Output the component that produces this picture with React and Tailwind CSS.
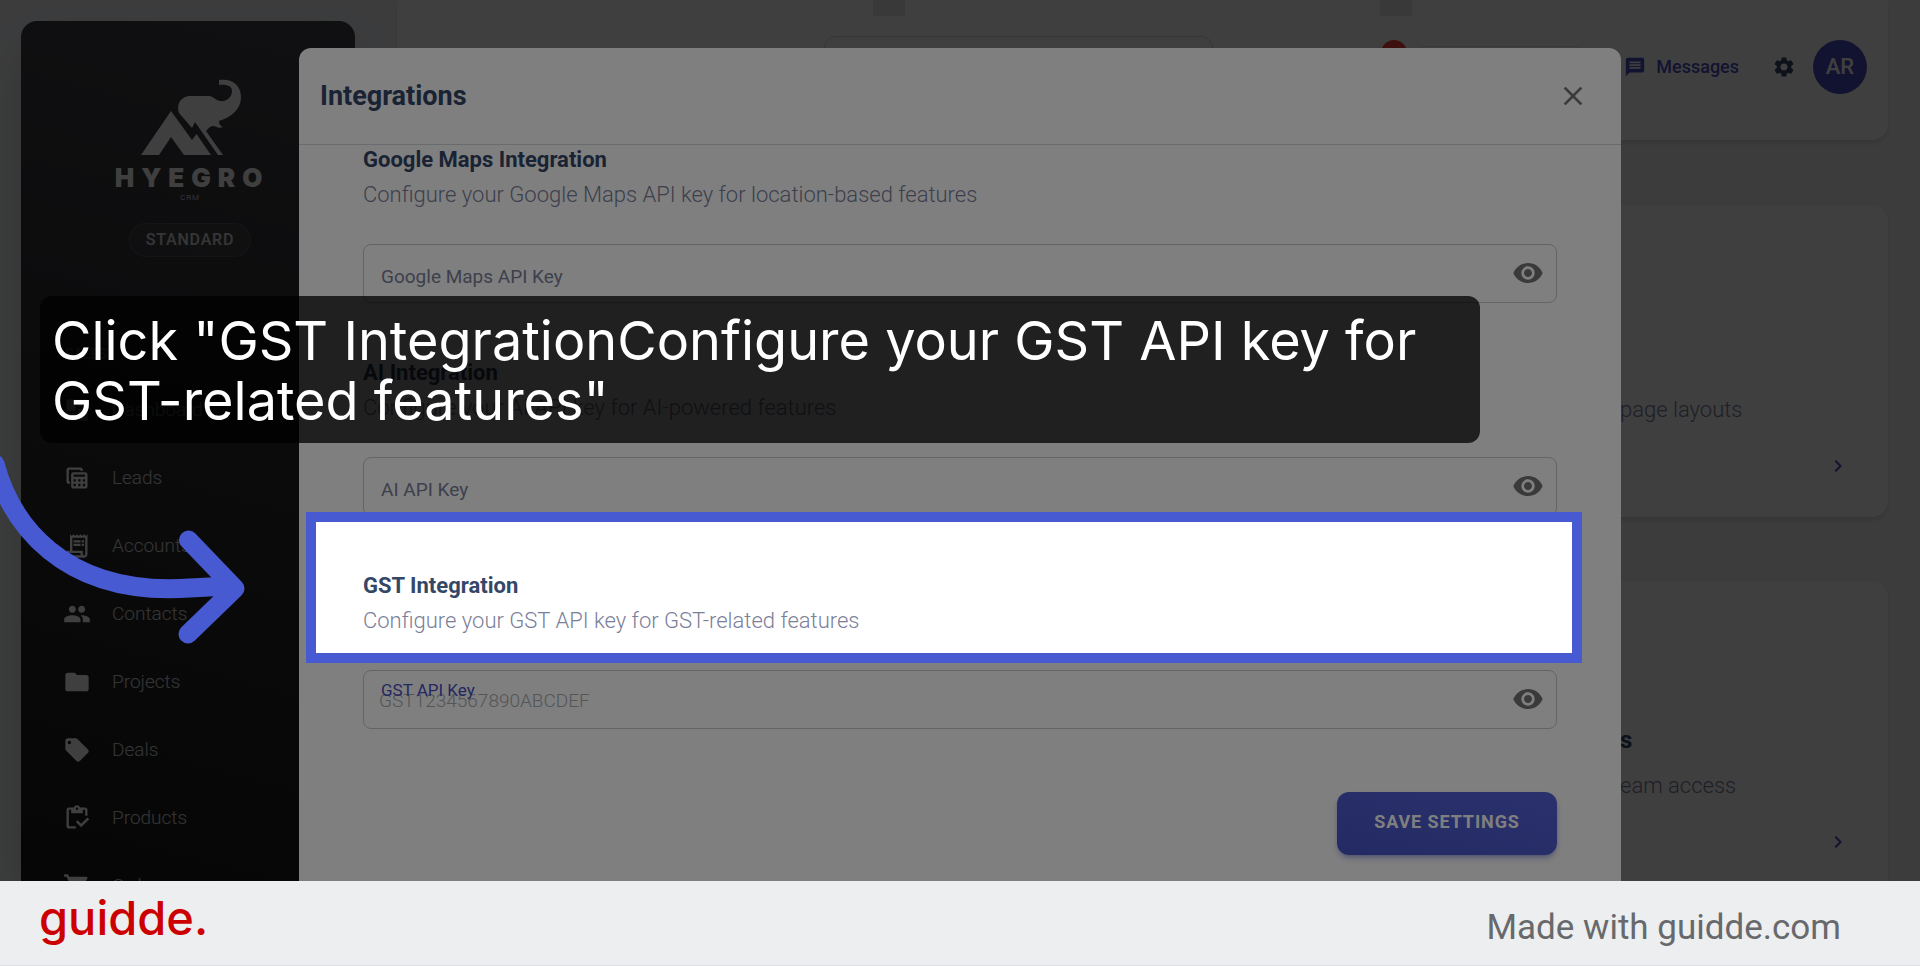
import {
  MdChevronRight,
  MdClose,
  MdDashboard,
  MdFolder,
  MdLocalOffer,
  MdMessage,
  MdOutlineInventory,
  MdOutlineReceiptLong,
  MdPeople,
  MdSettings,
  MdShoppingCart,
  MdTableView,
  MdVisibility,
} from 'react-icons/md'

const menu = [
  { name: 'Dashboard', icon: MdDashboard },
  { name: 'Leads', icon: MdTableView },
  { name: 'Accounts', icon: MdOutlineReceiptLong },
  { name: 'Contacts', icon: MdPeople },
  { name: 'Projects', icon: MdFolder },
  { name: 'Deals', icon: MdLocalOffer },
  { name: 'Products', icon: MdOutlineInventory },
  { name: 'Orders', icon: MdShoppingCart },
]

const sections = [
  {
    id: 'maps',
    title: 'Google Maps Integration',
    text: 'Configure your Google Maps API key for location-based features',
    label: 'Google Maps API Key',
  },
  {
    id: 'ai',
    title: 'AI Integration',
    text: 'Configure your AI API key for AI-powered features',
    label: 'AI API Key',
  },
  {
    id: 'gst',
    title: 'GST Integration',
    text: 'Configure your GST API key for GST-related features',
    label: 'GST API Key',
    placeholder: 'GST1234567890ABCDEF',
  },
]

function Logo() {
  return (
    <div className="flex flex-col items-center">
      <svg viewBox="0 0 102 78" className="w-[102px] h-[78px] fill-white ml-1" aria-hidden="true">
        <path d="M0 76 L30 32 L51 61 L55.500 55 L70 76 L43 76 L30 58 L18 76 Z" />
        <path d="M51 49 L38 34 C35 25 40 18 48 17 L68 17 C72 17 74 21 79 22 C86 23 91 18 91 12 C91 7 86 5 78 6 L78 1 C91 -1 100 6 100 18 C100 30 91 38 78 42 C78 45 79 47 82 48 C77 50 75 47 72 47 C69 47 67 50 65 52 L82 76 L77 76 L54 43 Z" />
      </svg>
      <div className="mt-[5px] pl-1 font-['Inter'] text-[26px] leading-8 font-black tracking-[7px] text-white">HYEGRO</div>
      <div className="text-[8px] leading-2 font-light tracking-widest text-white">CRM</div>
    </div>
  )
}

function Sidebar() {
  return (
    <aside className="w-[334px] shrink-0 ml-[21px] mt-[21px] rounded-t-2xl bg-linear-195 from-[#42424a] to-[#191919] shadow-2xl">
      <div className="flex flex-col items-center pt-[58px] pl-1">
        <Logo />
        <span className="mt-[21px] rounded-full border border-white/10 bg-white/5 px-4 py-1 text-[16px] leading-6 font-medium tracking-wider text-white/80">
          STANDARD
        </span>
      </div>
      <div className="mt-[87px] pl-11 text-sm leading-5 font-bold text-white/60">SALES</div>
      <nav className="mt-3">
        {menu.map(({ name, icon: Icon }) => (
          <a key={name} href="#" className="flex items-center h-[68px] pl-[42px] gap-[21px] text-[19px] font-light text-white/80">
            <Icon className="size-7 text-white" />
            {name}
          </a>
        ))}
      </nav>
    </aside>
  )
}

function Header() {
  return (
    <header className="relative h-[140px] shrink-0 rounded-b-2xl bg-white shadow-md">
      <div className="flex items-center justify-end h-[133px] pr-[21px]">
        <div className="w-[389px] h-[61px] mr-42 rounded-xl border border-gray-300" />
        <span className="self-start mt-10 mr-2.5 size-[26px] rounded-full bg-[#f44335]" />
        <div className="w-[166px] h-[42px] mr-[41px] rounded-lg border border-gray-200" />
        <button className="flex items-center gap-2.5 text-[18px] font-medium text-[#4a4ec4]">
          <MdMessage className="size-[22px]" />
          Messages
        </button>
        <button aria-label="Settings" className="ml-[33px] mr-[17px] text-[#344767]">
          <MdSettings className="size-6" />
        </button>
        <span className="flex items-center justify-center size-[54px] rounded-full bg-[#4a4ec4] text-[22px] font-medium text-white">
          AR
        </span>
      </div>
      <div className="absolute top-0 left-[476px] w-8 h-4 bg-gray-200" />
      <div className="absolute top-0 right-[476px] w-8 h-4 bg-gray-200" />
    </header>
  )
}

function SettingCard({ title, text }) {
  return (
    <section className="flex justify-end h-[311px] shrink-0 rounded-2xl bg-white shadow-md">
      <div className="w-[268px] pt-[143px]">
        <h3 className="h-[30px] text-2xl leading-[30px] font-bold text-[#344767]">{title}</h3>
        <p className="mt-4 text-[22px] leading-[30px] font-light text-[#7b809a]">{text}</p>
        <button aria-label="Open" className="flex ml-auto mr-[38px] mt-[29px] text-[#4a4ec4]">
          <MdChevronRight className="size-6" />
        </button>
      </div>
    </section>
  )
}

function KeyField({ id, label, placeholder }) {
  return (
    <div className="relative mt-[34px]">
      <input
        id={id}
        type="text"
        placeholder={placeholder}
        className="block w-full h-[59px] rounded-lg border border-[#c4c8cc] px-[15px] pt-0.5 text-[19px] font-light placeholder:text-[#a6abb0]"
      />
      <label
        htmlFor={id}
        className={
          placeholder
            ? 'absolute left-[18px] top-2.5 text-[17px] leading-5 text-[#4a4ec4]'
            : 'absolute left-[18px] top-[21px] text-[19px] leading-6 text-[#7b809a]'
        }
      >
        {label}
      </label>
      <button aria-label={`Show ${label}`} className="absolute right-[13px] top-[13px] text-[#757575]">
        <MdVisibility className="size-8" />
      </button>
    </div>
  )
}

function IntegrationsModal() {
  return (
    <div className="absolute inset-0 flex justify-center pt-12 bg-black/50">
      <div role="dialog" aria-label="Integrations" className="flex flex-col w-full max-w-[1322px] rounded-t-xl bg-white">
        <div className="flex items-center justify-between h-[97px] shrink-0 pl-[21px] pr-8 border-b border-[#d2d6da]">
          <h2 className="text-[27px] font-bold text-[#344767]">Integrations</h2>
          <button aria-label="Close" className="text-[#757575]">
            <MdClose className="size-8" />
          </button>
        </div>
        <form className="flex flex-col px-16">
          {sections.map((s) => (
            <div key={s.id} className="mb-[55px]">
              <h3 className="text-[22px] leading-[30px] font-bold text-[#344767]">{s.title}</h3>
              <p className="mt-[5px] text-[22px] leading-[30px] font-light text-[#7b809a]">{s.text}</p>
              <KeyField id={s.id} label={s.label} placeholder={s.placeholder} />
            </div>
          ))}
          <button
            type="button"
            className="self-end mt-2 w-[220px] h-[63px] rounded-xl bg-linear-195 from-[#5562d8] to-[#4855c8] pb-1 text-[18px] font-bold tracking-wider text-white shadow-md shadow-[#4855c8]/40"
          >
            SAVE SETTINGS
          </button>
        </form>
      </div>
    </div>
  )
}

export default function App() {
  return (
    <div className="flex flex-col h-screen font-['Roboto',sans-serif]">
      <main className="relative flex-1 min-h-0 overflow-hidden">
        <div className="flex h-full overflow-hidden bg-[#f0f2f5]">
          <Sidebar />
          <div className="flex flex-col flex-1 ml-[42px] mr-8">
            <Header />
            <div className="flex flex-col gap-[65px] mt-[66px]">
              <SettingCard text="page layouts" />
              <SettingCard title="s" text="eam access" />
            </div>
          </div>
        </div>

        <IntegrationsModal />

        {/* spotlight: everything outside the frame is dimmed by its shadow */}
        <div className="absolute left-[306px] right-[338px] top-[512px] h-[151px] border-10 border-[#475ad2] shadow-[0_0_0_9999px_rgba(0,0,0,0.5)]" />

        <div className="absolute left-10 right-[440px] top-[296px] h-[147px] rounded-xl bg-black/75 pl-3 pt-[15px] font-['Inter'] text-[54px] leading-[60px] text-white">
          Click "GST IntegrationConfigure your GST API key for
          <br />
          GST-related features"
        </div>

        <svg viewBox="0 0 250 190" className="absolute left-0 top-[455px] w-[250px] h-[190px]" aria-hidden="true">
          <g fill="none" stroke="#475ad2" strokeWidth="19" strokeLinecap="round" strokeLinejoin="round">
            <path d="M-5 9 C10 65 60 142 190 133 L228 131" />
            <path d="M188.500 85 L235 133.500 L188 179" />
          </g>
        </svg>
      </main>

      <footer className="flex items-center justify-between h-[85px] shrink-0 pl-[39px] pr-[79px] bg-[#edeeef] border-b border-[#dcdde0]">
        <span className="pb-2.5 font-['Inter'] text-[47px] leading-[60px] font-medium text-[#c00]">guidde.</span>
        <span className="pt-2.5 text-[35px] leading-[42px] text-[#67696c]">Made with guidde.com</span>
      </footer>
    </div>
  )
}
